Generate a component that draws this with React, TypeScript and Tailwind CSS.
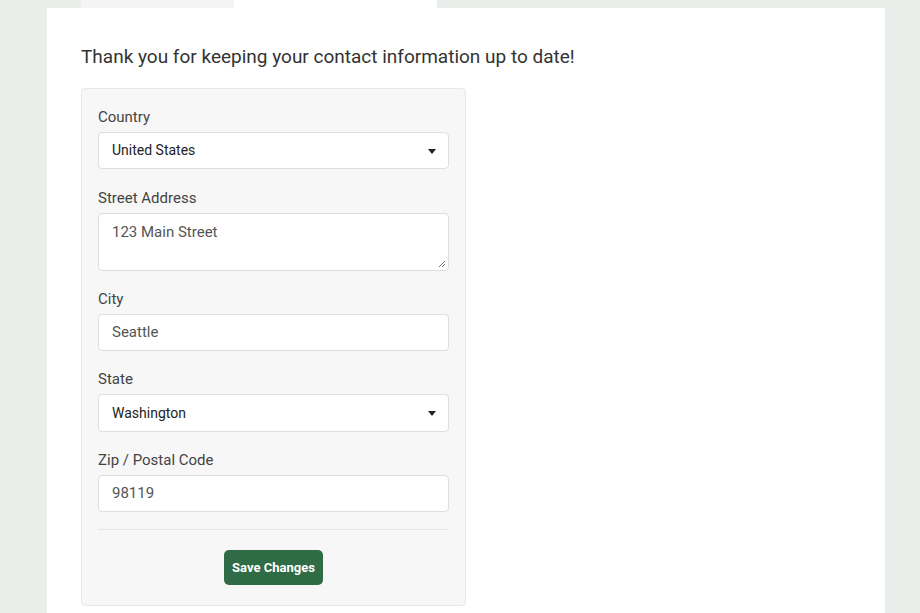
import React from 'react';

const font = { fontFamily: 'Roboto, "Liberation Sans", sans-serif' };

function Label({ children }: { children: React.ReactNode }) {
  return <label className="block text-[15px] leading-[20px] text-[#444] mb-[5px]">{children}</label>;
}

function Select({ value, tall }: { value: string; tall?: boolean }) {
  return (
    <div
      className={`flex items-center justify-between ${tall ? 'h-[38px]' : 'h-[37px]'} bg-white border border-[#dedede] rounded-[4px] pl-[13px] pr-[12px]`}
    >
      <span className="text-[14px] text-[#222]">{value}</span>
      <svg width="8" height="5" viewBox="0 0 8 5" className="mt-px">
        <path d="M0 0h8L4 5z" fill="#222" />
      </svg>
    </div>
  );
}

function Input({ value }: { value: string }) {
  return (
    <div className="flex items-center h-[37px] bg-white border border-[#dedede] rounded-[4px] px-[13px]">
      <span className="text-[15px] text-[#555]">{value}</span>
    </div>
  );
}

export default function App() {
  return (
    <div className="min-h-screen bg-[#e9eeea] overflow-hidden" style={font}>
      <div className="flex h-[8px] pl-[81px]">
        <div className="w-[153px] bg-[#f4f4f4]" />
        <div className="w-[203px] bg-white" />
      </div>
      <div className="mx-[47px] w-[838px] bg-white pt-[35px] pl-[34px] pb-[20px] min-h-[605px]">
        <h1 className="text-[19px] leading-[28px] text-[#333] mb-[17px]">
          Thank you for keeping your contact information up to date!
        </h1>
        <div className="w-[385px] bg-[#f7f7f7] border border-[#e8e8e8] rounded-[4px] px-[16px] pt-[18px] pb-[20px]">
          <Label>Country</Label>
          <Select value="United States" />

          <div className="mt-[19px]">
            <Label>Street Address</Label>
            <div className="relative h-[58px] bg-white border border-[#dedede] rounded-[4px] px-[13px] pt-[6px]">
              <span className="text-[15px] text-[#555]">123 Main Street</span>
              <svg width="9" height="9" viewBox="0 0 9 9" className="absolute right-[2px] bottom-[2px]">
                <path d="M8 2L2 8M8 5L5 8" stroke="#777" strokeWidth="1" />
              </svg>
            </div>
          </div>

          <div className="mt-[18px]">
            <Label>City</Label>
            <Input value="Seattle" />
          </div>

          <div className="mt-[18px]">
            <Label>State</Label>
            <Select value="Washington" tall />
          </div>

          <div className="mt-[18px]">
            <Label>Zip / Postal Code</Label>
            <Input value="98119" />
          </div>

          <div className="mt-[17px] border-t border-[#e6e6e6]" />

          <div className="flex justify-center mt-[20px]">
            <button className="h-[35px] px-[8px] rounded-[5px] bg-[#2f6b45] text-white text-[13px] font-bold">
              Save Changes
            </button>
          </div>
        </div>
      </div>
    </div>
  );
}
